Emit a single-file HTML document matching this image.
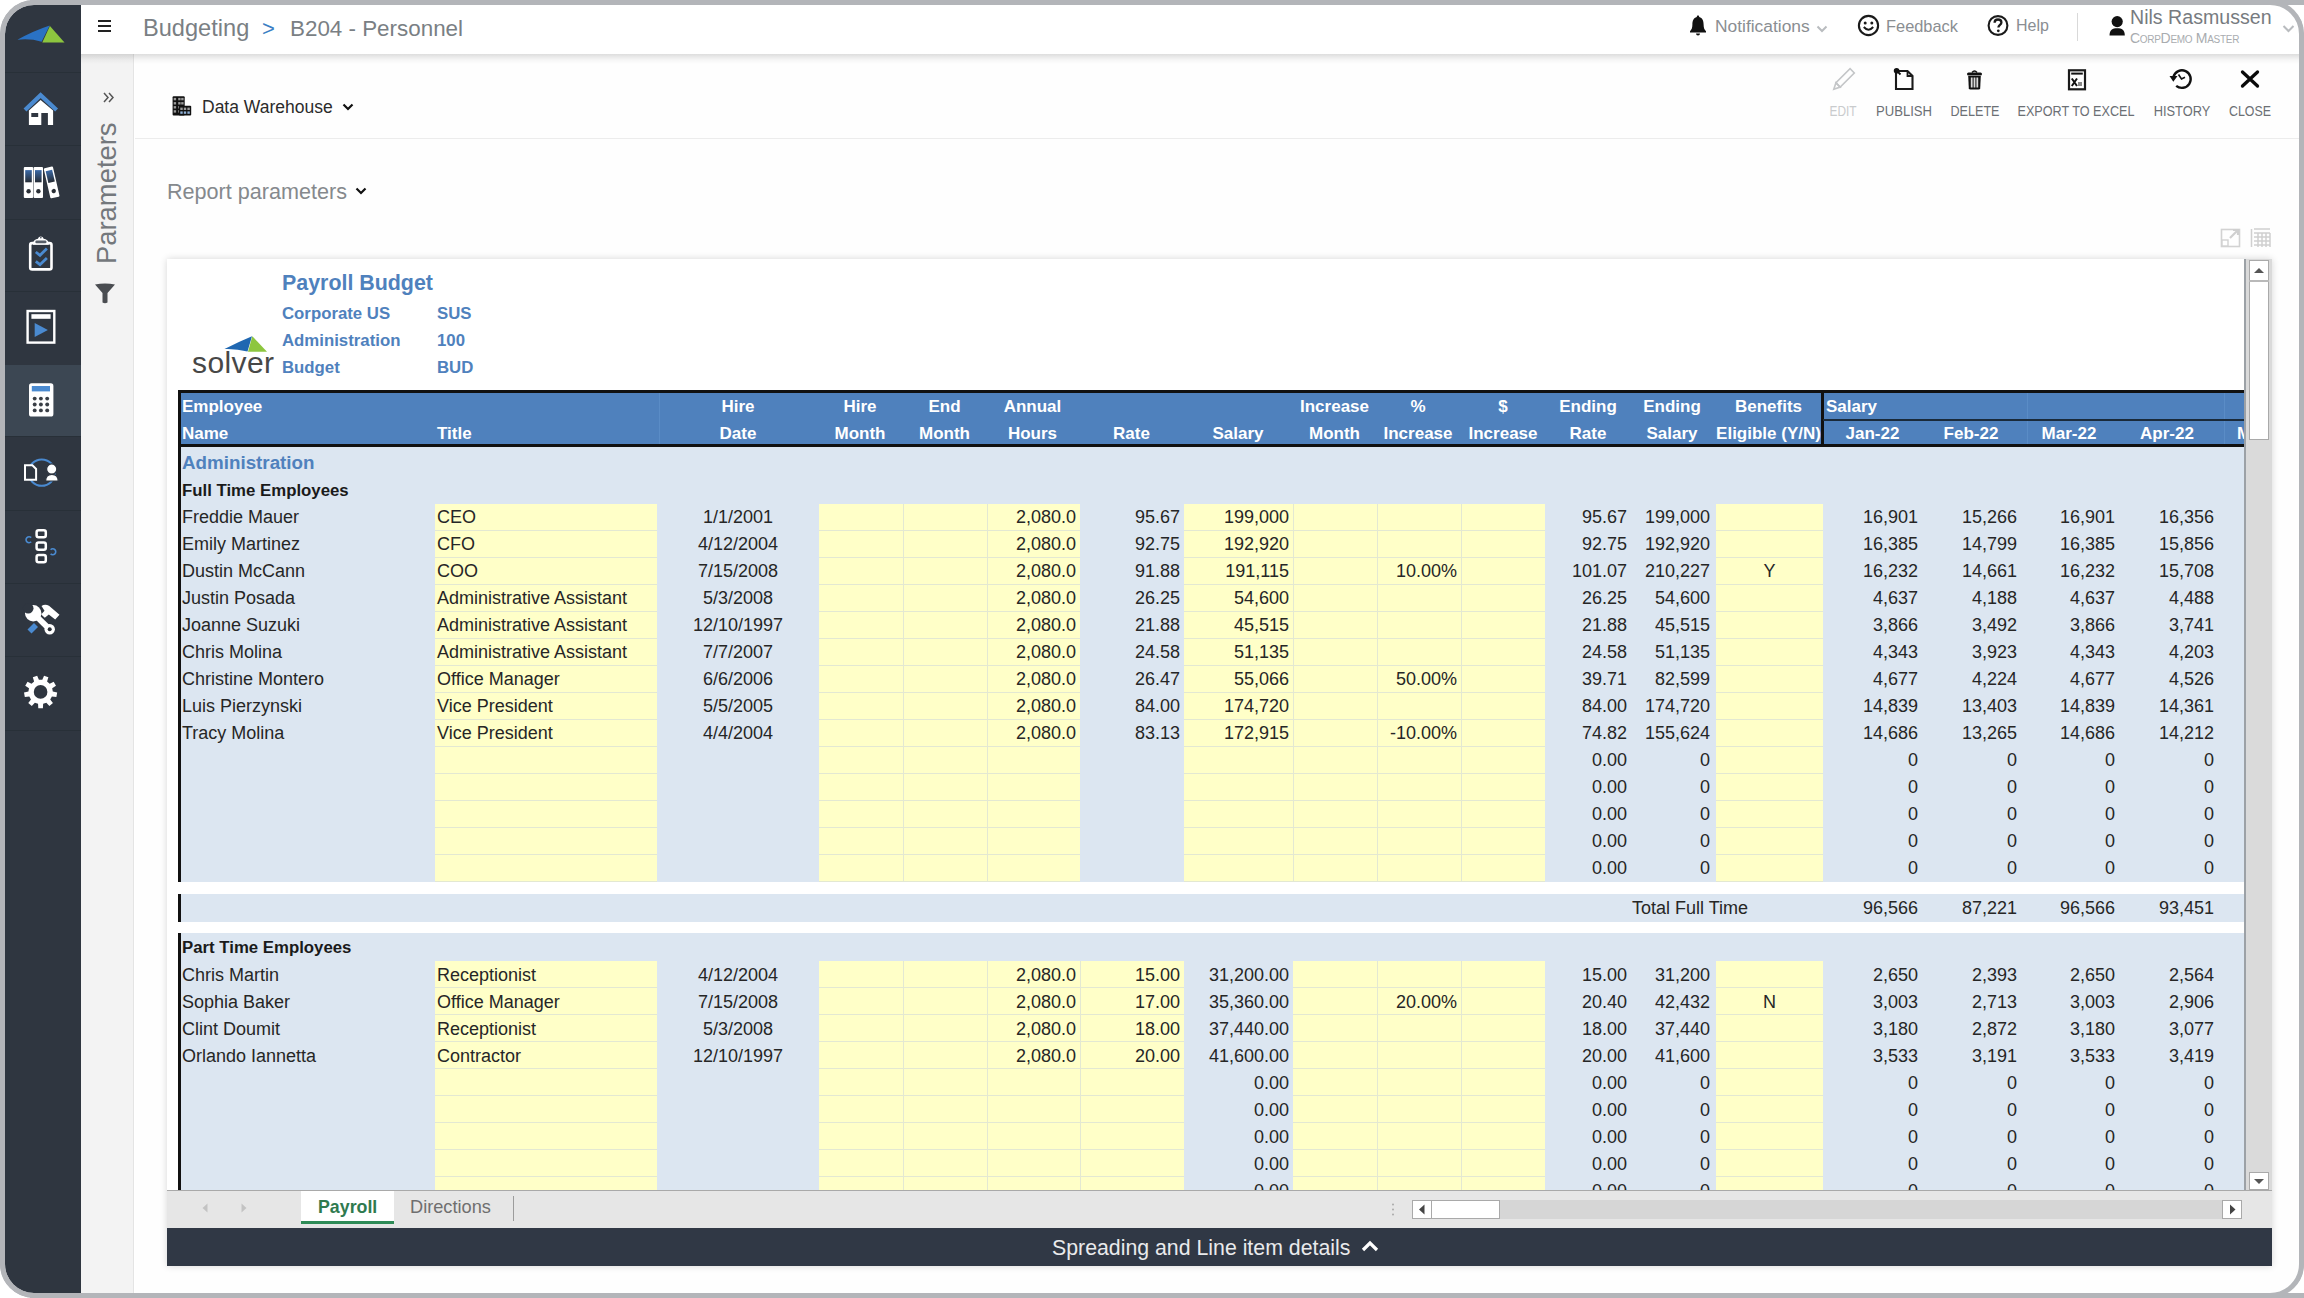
<!DOCTYPE html><html><head><meta charset="utf-8"><style>
*{margin:0;padding:0;box-sizing:border-box}
html,body{width:2304px;height:1298px;overflow:hidden;background:#fff;font-family:"Liberation Sans",sans-serif}
.a{position:absolute}
.t{position:absolute;white-space:nowrap}
.c{position:absolute;white-space:nowrap;font-size:18px;line-height:27px;color:#262626}
.r{text-align:right}
.m{text-align:center}
.hb{position:absolute;white-space:nowrap;font-size:17px;line-height:27px;color:#fff;font-weight:bold}
</style></head><body>
<div class="a" style="left:0;top:0;width:2304px;height:1298px;border:5px solid #b3b5b9;border-radius:34px;"></div>
<div class="a" style="left:30px;top:0;width:2274px;height:5px;background:#b3b5b9"></div>
<div class="a" style="left:30px;top:1293px;width:2274px;height:5px;background:#b3b5b9"></div>
<div class="a" style="left:5px;top:5px;width:76px;height:1288px;background:#2f3640;border-radius:29px 0 0 29px"></div>
<div class="a" style="left:5px;top:72px;width:76px;height:1px;background:#283038"></div>
<div class="a" style="left:5px;top:145px;width:76px;height:1px;background:#283038"></div>
<div class="a" style="left:5px;top:219px;width:76px;height:1px;background:#283038"></div>
<div class="a" style="left:5px;top:291px;width:76px;height:1px;background:#283038"></div>
<div class="a" style="left:5px;top:365px;width:76px;height:1px;background:#283038"></div>
<div class="a" style="left:5px;top:436px;width:76px;height:1px;background:#283038"></div>
<div class="a" style="left:5px;top:510px;width:76px;height:1px;background:#283038"></div>
<div class="a" style="left:5px;top:583px;width:76px;height:1px;background:#283038"></div>
<div class="a" style="left:5px;top:656px;width:76px;height:1px;background:#283038"></div>
<div class="a" style="left:5px;top:730px;width:76px;height:1px;background:#283038"></div>
<div class="a" style="left:5px;top:365px;width:76px;height:71px;background:#3c4753"></div>
<div class="a" style="left:81px;top:5px;width:2218px;height:49px;background:#fff"></div>
<div class="a" style="left:81px;top:54px;width:53px;height:1239px;background:#f3f3f3;border-right:1px solid #e4e4e4"></div>
<div class="a" style="left:135px;top:54px;width:2164px;height:1239px;background:#fefefe"></div>
<div class="a" style="left:135px;top:138px;width:2164px;height:1px;background:#ececec"></div>
<div class="a" style="left:81px;top:54px;width:2218px;height:10px;background:linear-gradient(to bottom,rgba(0,0,0,0.13),rgba(0,0,0,0.03) 60%,rgba(0,0,0,0))"></div>
<div class="t" style="left:143px;top:12.5px;font-size:23.6px;line-height:30px;color:#7a7f84;">Budgeting</div>
<div class="t" style="left:262px;top:13.5px;font-size:22px;line-height:30px;color:#3b7fc4;">&gt;</div>
<div class="t" style="left:290px;top:13.5px;font-size:22.4px;line-height:30px;color:#7a7f84;">B204 - Personnel</div>
<div class="t" style="left:1715px;top:13px;font-size:17.4px;line-height:26px;color:#8a8e92;">Notifications</div>
<div class="t" style="left:1886px;top:13px;font-size:16.4px;line-height:26px;color:#8a8e92;">Feedback</div>
<div class="t" style="left:2016px;top:13px;font-size:16px;line-height:26px;color:#8a8e92;">Help</div>
<div class="a" style="left:2077px;top:13px;width:1px;height:28px;background:#d9d9d9"></div>
<div class="t" style="left:2130px;top:4px;font-size:19.6px;line-height:26px;color:#777b80;">Nils Rasmussen</div>
<div class="t" style="left:2130px;top:30px;font-size:14px;line-height:16px;color:#a9acaf;font-variant:small-caps;letter-spacing:-0.3px">CorpDemo Master</div>
<div class="t" style="left:202px;top:95px;font-size:17.5px;line-height:24px;color:#2b2b2b;">Data Warehouse</div>
<div class="t" style="left:167px;top:178px;font-size:21.6px;line-height:28px;color:#85898d;">Report parameters</div>
<div class="t" style="left:92px;top:264px;font-size:27.4px;line-height:30px;color:#74787c;transform:rotate(-90deg);transform-origin:0 0;">Parameters</div>
<div class="t m" style="left:1742.5px;top:102px;width:200px;font-size:14.5px;line-height:18px;color:#c9cbcd;transform:scaleX(0.817);">EDIT</div>
<div class="t m" style="left:1804px;top:102px;width:200px;font-size:14.5px;line-height:18px;color:#6c7075;transform:scaleX(0.902);">PUBLISH</div>
<div class="t m" style="left:1875px;top:102px;width:200px;font-size:14.5px;line-height:18px;color:#6c7075;transform:scaleX(0.869);">DELETE</div>
<div class="t m" style="left:1976.3000000000002px;top:102px;width:200px;font-size:14.5px;line-height:18px;color:#6c7075;transform:scaleX(0.871);">EXPORT TO EXCEL</div>
<div class="t m" style="left:2082.3px;top:102px;width:200px;font-size:14.5px;line-height:18px;color:#6c7075;transform:scaleX(0.885);">HISTORY</div>
<div class="t m" style="left:2149.7px;top:102px;width:200px;font-size:14.5px;line-height:18px;color:#6c7075;transform:scaleX(0.854);">CLOSE</div>
<div class="a" style="left:167px;top:259px;width:2105px;height:1007px;background:#fff;box-shadow:0 0 7px rgba(0,0,0,0.16)"></div>
<div class="a" style="left:2244px;top:259px;width:28px;height:932px;background:#dadada;border-left:2px solid #9ca1a6"></div>
<div class="a" style="left:2249px;top:260px;width:20px;height:180px;background:#fff;border:1px solid #a9a9a9"></div>
<div class="a" style="left:2249px;top:280px;width:20px;height:2px;background:#b9b9b9"></div>
<div class="a" style="left:2249px;top:1172px;width:20px;height:18px;background:#fff;border:1px solid #a9a9a9"></div>
<div class="a" style="left:167px;top:1190px;width:2105px;height:38px;background:#e6e6e6;border-top:1px solid #a9a9a9"></div>
<div class="a" style="left:301px;top:1191px;width:93px;height:33px;background:#fff;border-bottom:3px solid #2e8b57"></div>
<div class="t" style="left:318px;top:1195px;font-size:17.8px;line-height:24px;color:#2f7a4f;font-weight:bold;">Payroll</div>
<div class="t" style="left:410px;top:1195px;font-size:18.2px;line-height:24px;color:#6f6f6f;">Directions</div>
<div class="a" style="left:513px;top:1196px;width:1px;height:25px;background:#9c9c9c"></div>
<div class="a" style="left:1412px;top:1200px;width:830px;height:19px;background:#d6d6d6"></div>
<div class="a" style="left:1412px;top:1200px;width:88px;height:19px;background:#fff;border:1px solid #a9a9a9"></div>
<div class="a" style="left:1431px;top:1200px;width:1px;height:19px;background:#a9a9a9"></div>
<div class="a" style="left:2222px;top:1200px;width:20px;height:19px;background:#fff;border:1px solid #a9a9a9"></div>
<div class="a" style="left:167px;top:1228px;width:2105px;height:38px;background:#303845"></div>
<div class="t" style="left:1052px;top:1234px;font-size:21.3px;line-height:28px;color:#e9eaec;">Spreading and Line item details</div>
<div class="a" style="left:0;top:0;width:2304px;height:1298px;clip-path:inset(259px 60px 108px 167px)">
<div class="t" style="left:282px;top:270px;font-size:21.4px;line-height:26px;color:#4f81bd;font-weight:bold;">Payroll Budget</div>
<div class="t" style="left:282px;top:301px;font-size:16.8px;line-height:26px;color:#4f81bd;font-weight:bold;">Corporate US</div>
<div class="t" style="left:437px;top:301px;font-size:16.8px;line-height:26px;color:#4f81bd;font-weight:bold;">SUS</div>
<div class="t" style="left:282px;top:328px;font-size:16.8px;line-height:26px;color:#4f81bd;font-weight:bold;">Administration</div>
<div class="t" style="left:437px;top:328px;font-size:16.8px;line-height:26px;color:#4f81bd;font-weight:bold;">100</div>
<div class="t" style="left:282px;top:355px;font-size:16.8px;line-height:26px;color:#4f81bd;font-weight:bold;">Budget</div>
<div class="t" style="left:437px;top:355px;font-size:16.8px;line-height:26px;color:#4f81bd;font-weight:bold;">BUD</div>
<div class="t" style="left:192px;top:347px;font-size:30px;line-height:32px;color:#474747;letter-spacing:0.4px">solver</div>
<div class="a" style="left:178px;top:390px;width:2066px;height:57px;background:#4f81bd;border-top:3px solid #111;border-bottom:3px solid #111;border-left:3px solid #111"></div>
<div class="a" style="left:659px;top:393px;width:1px;height:51px;background:#5a8cc6"></div>
<div class="a" style="left:2027px;top:393px;width:1px;height:51px;background:#5a8cc6"></div>
<div class="a" style="left:2224px;top:393px;width:1px;height:51px;background:#5a8cc6"></div>
<div class="a" style="left:1821px;top:390px;width:3px;height:57px;background:#111"></div>
<div class="a" style="left:1823px;top:419px;width:421px;height:2px;background:#1a2a3a"></div>
<div class="hb" style="left:182px;top:393px">Employee</div>
<div class="hb" style="left:182px;top:420px">Name</div>
<div class="hb" style="left:437px;top:420px">Title</div>
<div class="hb m" style="left:638px;top:393px;width:200px">Hire</div>
<div class="hb m" style="left:638px;top:420px;width:200px">Date</div>
<div class="hb m" style="left:760px;top:393px;width:200px">Hire</div>
<div class="hb m" style="left:760px;top:420px;width:200px">Month</div>
<div class="hb m" style="left:844.5px;top:393px;width:200px">End</div>
<div class="hb m" style="left:844.5px;top:420px;width:200px">Month</div>
<div class="hb m" style="left:932.5px;top:393px;width:200px">Annual</div>
<div class="hb m" style="left:932.5px;top:420px;width:200px">Hours</div>
<div class="hb m" style="left:1031.5px;top:420px;width:200px">Rate</div>
<div class="hb m" style="left:1138px;top:420px;width:200px">Salary</div>
<div class="hb m" style="left:1234.5px;top:393px;width:200px">Increase</div>
<div class="hb m" style="left:1234.5px;top:420px;width:200px">Month</div>
<div class="hb m" style="left:1318px;top:393px;width:200px">%</div>
<div class="hb m" style="left:1318px;top:420px;width:200px">Increase</div>
<div class="hb m" style="left:1403px;top:393px;width:200px">$</div>
<div class="hb m" style="left:1403px;top:420px;width:200px">Increase</div>
<div class="hb m" style="left:1488px;top:393px;width:200px">Ending</div>
<div class="hb m" style="left:1488px;top:420px;width:200px">Rate</div>
<div class="hb m" style="left:1572px;top:393px;width:200px">Ending</div>
<div class="hb m" style="left:1572px;top:420px;width:200px">Salary</div>
<div class="hb m" style="left:1668.5px;top:393px;width:200px">Benefits</div>
<div class="hb m" style="left:1668.5px;top:420px;width:200px">Eligible (Y/N)</div>
<div class="hb" style="left:1826px;top:393px">Salary</div>
<div class="hb m" style="left:1772.5px;top:420px;width:200px">Jan-22</div>
<div class="hb m" style="left:1871px;top:420px;width:200px">Feb-22</div>
<div class="hb m" style="left:1969px;top:420px;width:200px">Mar-22</div>
<div class="hb m" style="left:2067px;top:420px;width:200px">Apr-22</div>
<div class="hb" style="left:2237px;top:420px">May-22</div>
<div class="a" style="left:178px;top:447px;width:2066px;height:435px;background:#dce6f1;border-left:3px solid #111"></div>
<div class="a" style="left:178px;top:894px;width:2066px;height:28px;background:#dce6f1;border-left:3px solid #111"></div>
<div class="a" style="left:178px;top:933px;width:2066px;height:257px;background:#dce6f1;border-left:3px solid #111"></div>
<div class="t" style="left:182px;top:449px;font-size:18.8px;line-height:28px;color:#4f81bd;font-weight:bold;">Administration</div>
<div class="t" style="left:182px;top:477px;font-size:16.8px;line-height:27px;color:#1a1a1a;font-weight:bold;">Full Time Employees</div>
<div class="t" style="left:182px;top:934px;font-size:16.8px;line-height:27px;color:#1a1a1a;font-weight:bold;">Part Time Employees</div>
<div class="a" style="left:435px;top:504px;width:222px;height:378px;background:repeating-linear-gradient(to bottom,#ffffc8 0,#ffffc8 26px,#e3e8d2 26px,#e3e8d2 27px);"></div>
<div class="a" style="left:819px;top:504px;width:84px;height:378px;background:repeating-linear-gradient(to bottom,#ffffc8 0,#ffffc8 26px,#e3e8d2 26px,#e3e8d2 27px);"></div>
<div class="a" style="left:903px;top:504px;width:84px;height:378px;background:repeating-linear-gradient(to bottom,#ffffc8 0,#ffffc8 26px,#e3e8d2 26px,#e3e8d2 27px);border-left:1px solid #e3e8d2;"></div>
<div class="a" style="left:987px;top:504px;width:93px;height:378px;background:repeating-linear-gradient(to bottom,#ffffc8 0,#ffffc8 26px,#e3e8d2 26px,#e3e8d2 27px);border-left:1px solid #e3e8d2;"></div>
<div class="a" style="left:1184px;top:504px;width:109px;height:378px;background:repeating-linear-gradient(to bottom,#ffffc8 0,#ffffc8 26px,#e3e8d2 26px,#e3e8d2 27px);"></div>
<div class="a" style="left:1293px;top:504px;width:84px;height:378px;background:repeating-linear-gradient(to bottom,#ffffc8 0,#ffffc8 26px,#e3e8d2 26px,#e3e8d2 27px);border-left:1px solid #e3e8d2;"></div>
<div class="a" style="left:1377px;top:504px;width:84px;height:378px;background:repeating-linear-gradient(to bottom,#ffffc8 0,#ffffc8 26px,#e3e8d2 26px,#e3e8d2 27px);border-left:1px solid #e3e8d2;"></div>
<div class="a" style="left:1461px;top:504px;width:84px;height:378px;background:repeating-linear-gradient(to bottom,#ffffc8 0,#ffffc8 26px,#e3e8d2 26px,#e3e8d2 27px);border-left:1px solid #e3e8d2;"></div>
<div class="a" style="left:1716px;top:504px;width:107px;height:378px;background:repeating-linear-gradient(to bottom,#ffffc8 0,#ffffc8 26px,#e3e8d2 26px,#e3e8d2 27px);"></div>
<div class="a" style="left:435px;top:961px;width:222px;height:243px;background:repeating-linear-gradient(to bottom,#ffffc8 0,#ffffc8 26px,#e3e8d2 26px,#e3e8d2 27px);"></div>
<div class="a" style="left:819px;top:961px;width:84px;height:243px;background:repeating-linear-gradient(to bottom,#ffffc8 0,#ffffc8 26px,#e3e8d2 26px,#e3e8d2 27px);"></div>
<div class="a" style="left:903px;top:961px;width:84px;height:243px;background:repeating-linear-gradient(to bottom,#ffffc8 0,#ffffc8 26px,#e3e8d2 26px,#e3e8d2 27px);border-left:1px solid #e3e8d2;"></div>
<div class="a" style="left:987px;top:961px;width:93px;height:243px;background:repeating-linear-gradient(to bottom,#ffffc8 0,#ffffc8 26px,#e3e8d2 26px,#e3e8d2 27px);border-left:1px solid #e3e8d2;"></div>
<div class="a" style="left:1080px;top:961px;width:104px;height:243px;background:repeating-linear-gradient(to bottom,#ffffc8 0,#ffffc8 26px,#e3e8d2 26px,#e3e8d2 27px);border-left:1px solid #e3e8d2;"></div>
<div class="a" style="left:1293px;top:961px;width:84px;height:243px;background:repeating-linear-gradient(to bottom,#ffffc8 0,#ffffc8 26px,#e3e8d2 26px,#e3e8d2 27px);"></div>
<div class="a" style="left:1377px;top:961px;width:84px;height:243px;background:repeating-linear-gradient(to bottom,#ffffc8 0,#ffffc8 26px,#e3e8d2 26px,#e3e8d2 27px);border-left:1px solid #e3e8d2;"></div>
<div class="a" style="left:1461px;top:961px;width:84px;height:243px;background:repeating-linear-gradient(to bottom,#ffffc8 0,#ffffc8 26px,#e3e8d2 26px,#e3e8d2 27px);border-left:1px solid #e3e8d2;"></div>
<div class="a" style="left:1716px;top:961px;width:107px;height:243px;background:repeating-linear-gradient(to bottom,#ffffc8 0,#ffffc8 26px,#e3e8d2 26px,#e3e8d2 27px);"></div>
<div class="c" style="left:182px;top:504px">Freddie Mauer</div>
<div class="c" style="left:437px;top:504px">CEO</div>
<div class="c m" style="left:658px;top:504px;width:160px">1/1/2001</div>
<div class="c r" style="left:926px;top:504px;width:150px">2,080.0</div>
<div class="c r" style="left:1030px;top:504px;width:150px">95.67</div>
<div class="c r" style="left:1139px;top:504px;width:150px">199,000</div>
<div class="c r" style="left:1477px;top:504px;width:150px">95.67</div>
<div class="c r" style="left:1560px;top:504px;width:150px">199,000</div>
<div class="c r" style="left:1768px;top:504px;width:150px">16,901</div>
<div class="c r" style="left:1867px;top:504px;width:150px">15,266</div>
<div class="c r" style="left:1965px;top:504px;width:150px">16,901</div>
<div class="c r" style="left:2064px;top:504px;width:150px">16,356</div>
<div class="c" style="left:182px;top:531px">Emily Martinez</div>
<div class="c" style="left:437px;top:531px">CFO</div>
<div class="c m" style="left:658px;top:531px;width:160px">4/12/2004</div>
<div class="c r" style="left:926px;top:531px;width:150px">2,080.0</div>
<div class="c r" style="left:1030px;top:531px;width:150px">92.75</div>
<div class="c r" style="left:1139px;top:531px;width:150px">192,920</div>
<div class="c r" style="left:1477px;top:531px;width:150px">92.75</div>
<div class="c r" style="left:1560px;top:531px;width:150px">192,920</div>
<div class="c r" style="left:1768px;top:531px;width:150px">16,385</div>
<div class="c r" style="left:1867px;top:531px;width:150px">14,799</div>
<div class="c r" style="left:1965px;top:531px;width:150px">16,385</div>
<div class="c r" style="left:2064px;top:531px;width:150px">15,856</div>
<div class="c" style="left:182px;top:558px">Dustin McCann</div>
<div class="c" style="left:437px;top:558px">COO</div>
<div class="c m" style="left:658px;top:558px;width:160px">7/15/2008</div>
<div class="c r" style="left:926px;top:558px;width:150px">2,080.0</div>
<div class="c r" style="left:1030px;top:558px;width:150px">91.88</div>
<div class="c r" style="left:1139px;top:558px;width:150px">191,115</div>
<div class="c r" style="left:1307px;top:558px;width:150px">10.00%</div>
<div class="c r" style="left:1477px;top:558px;width:150px">101.07</div>
<div class="c r" style="left:1560px;top:558px;width:150px">210,227</div>
<div class="c m" style="left:1689.5px;top:558px;width:160px">Y</div>
<div class="c r" style="left:1768px;top:558px;width:150px">16,232</div>
<div class="c r" style="left:1867px;top:558px;width:150px">14,661</div>
<div class="c r" style="left:1965px;top:558px;width:150px">16,232</div>
<div class="c r" style="left:2064px;top:558px;width:150px">15,708</div>
<div class="c" style="left:182px;top:585px">Justin Posada</div>
<div class="c" style="left:437px;top:585px">Administrative Assistant</div>
<div class="c m" style="left:658px;top:585px;width:160px">5/3/2008</div>
<div class="c r" style="left:926px;top:585px;width:150px">2,080.0</div>
<div class="c r" style="left:1030px;top:585px;width:150px">26.25</div>
<div class="c r" style="left:1139px;top:585px;width:150px">54,600</div>
<div class="c r" style="left:1477px;top:585px;width:150px">26.25</div>
<div class="c r" style="left:1560px;top:585px;width:150px">54,600</div>
<div class="c r" style="left:1768px;top:585px;width:150px">4,637</div>
<div class="c r" style="left:1867px;top:585px;width:150px">4,188</div>
<div class="c r" style="left:1965px;top:585px;width:150px">4,637</div>
<div class="c r" style="left:2064px;top:585px;width:150px">4,488</div>
<div class="c" style="left:182px;top:612px">Joanne Suzuki</div>
<div class="c" style="left:437px;top:612px">Administrative Assistant</div>
<div class="c m" style="left:658px;top:612px;width:160px">12/10/1997</div>
<div class="c r" style="left:926px;top:612px;width:150px">2,080.0</div>
<div class="c r" style="left:1030px;top:612px;width:150px">21.88</div>
<div class="c r" style="left:1139px;top:612px;width:150px">45,515</div>
<div class="c r" style="left:1477px;top:612px;width:150px">21.88</div>
<div class="c r" style="left:1560px;top:612px;width:150px">45,515</div>
<div class="c r" style="left:1768px;top:612px;width:150px">3,866</div>
<div class="c r" style="left:1867px;top:612px;width:150px">3,492</div>
<div class="c r" style="left:1965px;top:612px;width:150px">3,866</div>
<div class="c r" style="left:2064px;top:612px;width:150px">3,741</div>
<div class="c" style="left:182px;top:639px">Chris Molina</div>
<div class="c" style="left:437px;top:639px">Administrative Assistant</div>
<div class="c m" style="left:658px;top:639px;width:160px">7/7/2007</div>
<div class="c r" style="left:926px;top:639px;width:150px">2,080.0</div>
<div class="c r" style="left:1030px;top:639px;width:150px">24.58</div>
<div class="c r" style="left:1139px;top:639px;width:150px">51,135</div>
<div class="c r" style="left:1477px;top:639px;width:150px">24.58</div>
<div class="c r" style="left:1560px;top:639px;width:150px">51,135</div>
<div class="c r" style="left:1768px;top:639px;width:150px">4,343</div>
<div class="c r" style="left:1867px;top:639px;width:150px">3,923</div>
<div class="c r" style="left:1965px;top:639px;width:150px">4,343</div>
<div class="c r" style="left:2064px;top:639px;width:150px">4,203</div>
<div class="c" style="left:182px;top:666px">Christine Montero</div>
<div class="c" style="left:437px;top:666px">Office Manager</div>
<div class="c m" style="left:658px;top:666px;width:160px">6/6/2006</div>
<div class="c r" style="left:926px;top:666px;width:150px">2,080.0</div>
<div class="c r" style="left:1030px;top:666px;width:150px">26.47</div>
<div class="c r" style="left:1139px;top:666px;width:150px">55,066</div>
<div class="c r" style="left:1307px;top:666px;width:150px">50.00%</div>
<div class="c r" style="left:1477px;top:666px;width:150px">39.71</div>
<div class="c r" style="left:1560px;top:666px;width:150px">82,599</div>
<div class="c r" style="left:1768px;top:666px;width:150px">4,677</div>
<div class="c r" style="left:1867px;top:666px;width:150px">4,224</div>
<div class="c r" style="left:1965px;top:666px;width:150px">4,677</div>
<div class="c r" style="left:2064px;top:666px;width:150px">4,526</div>
<div class="c" style="left:182px;top:693px">Luis Pierzynski</div>
<div class="c" style="left:437px;top:693px">Vice President</div>
<div class="c m" style="left:658px;top:693px;width:160px">5/5/2005</div>
<div class="c r" style="left:926px;top:693px;width:150px">2,080.0</div>
<div class="c r" style="left:1030px;top:693px;width:150px">84.00</div>
<div class="c r" style="left:1139px;top:693px;width:150px">174,720</div>
<div class="c r" style="left:1477px;top:693px;width:150px">84.00</div>
<div class="c r" style="left:1560px;top:693px;width:150px">174,720</div>
<div class="c r" style="left:1768px;top:693px;width:150px">14,839</div>
<div class="c r" style="left:1867px;top:693px;width:150px">13,403</div>
<div class="c r" style="left:1965px;top:693px;width:150px">14,839</div>
<div class="c r" style="left:2064px;top:693px;width:150px">14,361</div>
<div class="c" style="left:182px;top:720px">Tracy Molina</div>
<div class="c" style="left:437px;top:720px">Vice President</div>
<div class="c m" style="left:658px;top:720px;width:160px">4/4/2004</div>
<div class="c r" style="left:926px;top:720px;width:150px">2,080.0</div>
<div class="c r" style="left:1030px;top:720px;width:150px">83.13</div>
<div class="c r" style="left:1139px;top:720px;width:150px">172,915</div>
<div class="c r" style="left:1307px;top:720px;width:150px">-10.00%</div>
<div class="c r" style="left:1477px;top:720px;width:150px">74.82</div>
<div class="c r" style="left:1560px;top:720px;width:150px">155,624</div>
<div class="c r" style="left:1768px;top:720px;width:150px">14,686</div>
<div class="c r" style="left:1867px;top:720px;width:150px">13,265</div>
<div class="c r" style="left:1965px;top:720px;width:150px">14,686</div>
<div class="c r" style="left:2064px;top:720px;width:150px">14,212</div>
<div class="c r" style="left:1477px;top:747px;width:150px">0.00</div>
<div class="c r" style="left:1560px;top:747px;width:150px">0</div>
<div class="c r" style="left:1768px;top:747px;width:150px">0</div>
<div class="c r" style="left:1867px;top:747px;width:150px">0</div>
<div class="c r" style="left:1965px;top:747px;width:150px">0</div>
<div class="c r" style="left:2064px;top:747px;width:150px">0</div>
<div class="c r" style="left:1477px;top:774px;width:150px">0.00</div>
<div class="c r" style="left:1560px;top:774px;width:150px">0</div>
<div class="c r" style="left:1768px;top:774px;width:150px">0</div>
<div class="c r" style="left:1867px;top:774px;width:150px">0</div>
<div class="c r" style="left:1965px;top:774px;width:150px">0</div>
<div class="c r" style="left:2064px;top:774px;width:150px">0</div>
<div class="c r" style="left:1477px;top:801px;width:150px">0.00</div>
<div class="c r" style="left:1560px;top:801px;width:150px">0</div>
<div class="c r" style="left:1768px;top:801px;width:150px">0</div>
<div class="c r" style="left:1867px;top:801px;width:150px">0</div>
<div class="c r" style="left:1965px;top:801px;width:150px">0</div>
<div class="c r" style="left:2064px;top:801px;width:150px">0</div>
<div class="c r" style="left:1477px;top:828px;width:150px">0.00</div>
<div class="c r" style="left:1560px;top:828px;width:150px">0</div>
<div class="c r" style="left:1768px;top:828px;width:150px">0</div>
<div class="c r" style="left:1867px;top:828px;width:150px">0</div>
<div class="c r" style="left:1965px;top:828px;width:150px">0</div>
<div class="c r" style="left:2064px;top:828px;width:150px">0</div>
<div class="c r" style="left:1477px;top:855px;width:150px">0.00</div>
<div class="c r" style="left:1560px;top:855px;width:150px">0</div>
<div class="c r" style="left:1768px;top:855px;width:150px">0</div>
<div class="c r" style="left:1867px;top:855px;width:150px">0</div>
<div class="c r" style="left:1965px;top:855px;width:150px">0</div>
<div class="c r" style="left:2064px;top:855px;width:150px">0</div>
<div class="c" style="left:182px;top:962px">Chris Martin</div>
<div class="c" style="left:437px;top:962px">Receptionist</div>
<div class="c m" style="left:658px;top:962px;width:160px">4/12/2004</div>
<div class="c r" style="left:926px;top:962px;width:150px">2,080.0</div>
<div class="c r" style="left:1030px;top:962px;width:150px">15.00</div>
<div class="c r" style="left:1139px;top:962px;width:150px">31,200.00</div>
<div class="c r" style="left:1477px;top:962px;width:150px">15.00</div>
<div class="c r" style="left:1560px;top:962px;width:150px">31,200</div>
<div class="c r" style="left:1768px;top:962px;width:150px">2,650</div>
<div class="c r" style="left:1867px;top:962px;width:150px">2,393</div>
<div class="c r" style="left:1965px;top:962px;width:150px">2,650</div>
<div class="c r" style="left:2064px;top:962px;width:150px">2,564</div>
<div class="c" style="left:182px;top:989px">Sophia Baker</div>
<div class="c" style="left:437px;top:989px">Office Manager</div>
<div class="c m" style="left:658px;top:989px;width:160px">7/15/2008</div>
<div class="c r" style="left:926px;top:989px;width:150px">2,080.0</div>
<div class="c r" style="left:1030px;top:989px;width:150px">17.00</div>
<div class="c r" style="left:1139px;top:989px;width:150px">35,360.00</div>
<div class="c r" style="left:1307px;top:989px;width:150px">20.00%</div>
<div class="c r" style="left:1477px;top:989px;width:150px">20.40</div>
<div class="c r" style="left:1560px;top:989px;width:150px">42,432</div>
<div class="c m" style="left:1689.5px;top:989px;width:160px">N</div>
<div class="c r" style="left:1768px;top:989px;width:150px">3,003</div>
<div class="c r" style="left:1867px;top:989px;width:150px">2,713</div>
<div class="c r" style="left:1965px;top:989px;width:150px">3,003</div>
<div class="c r" style="left:2064px;top:989px;width:150px">2,906</div>
<div class="c" style="left:182px;top:1016px">Clint Doumit</div>
<div class="c" style="left:437px;top:1016px">Receptionist</div>
<div class="c m" style="left:658px;top:1016px;width:160px">5/3/2008</div>
<div class="c r" style="left:926px;top:1016px;width:150px">2,080.0</div>
<div class="c r" style="left:1030px;top:1016px;width:150px">18.00</div>
<div class="c r" style="left:1139px;top:1016px;width:150px">37,440.00</div>
<div class="c r" style="left:1477px;top:1016px;width:150px">18.00</div>
<div class="c r" style="left:1560px;top:1016px;width:150px">37,440</div>
<div class="c r" style="left:1768px;top:1016px;width:150px">3,180</div>
<div class="c r" style="left:1867px;top:1016px;width:150px">2,872</div>
<div class="c r" style="left:1965px;top:1016px;width:150px">3,180</div>
<div class="c r" style="left:2064px;top:1016px;width:150px">3,077</div>
<div class="c" style="left:182px;top:1043px">Orlando Iannetta</div>
<div class="c" style="left:437px;top:1043px">Contractor</div>
<div class="c m" style="left:658px;top:1043px;width:160px">12/10/1997</div>
<div class="c r" style="left:926px;top:1043px;width:150px">2,080.0</div>
<div class="c r" style="left:1030px;top:1043px;width:150px">20.00</div>
<div class="c r" style="left:1139px;top:1043px;width:150px">41,600.00</div>
<div class="c r" style="left:1477px;top:1043px;width:150px">20.00</div>
<div class="c r" style="left:1560px;top:1043px;width:150px">41,600</div>
<div class="c r" style="left:1768px;top:1043px;width:150px">3,533</div>
<div class="c r" style="left:1867px;top:1043px;width:150px">3,191</div>
<div class="c r" style="left:1965px;top:1043px;width:150px">3,533</div>
<div class="c r" style="left:2064px;top:1043px;width:150px">3,419</div>
<div class="c r" style="left:1139px;top:1070px;width:150px">0.00</div>
<div class="c r" style="left:1477px;top:1070px;width:150px">0.00</div>
<div class="c r" style="left:1560px;top:1070px;width:150px">0</div>
<div class="c r" style="left:1768px;top:1070px;width:150px">0</div>
<div class="c r" style="left:1867px;top:1070px;width:150px">0</div>
<div class="c r" style="left:1965px;top:1070px;width:150px">0</div>
<div class="c r" style="left:2064px;top:1070px;width:150px">0</div>
<div class="c r" style="left:1139px;top:1097px;width:150px">0.00</div>
<div class="c r" style="left:1477px;top:1097px;width:150px">0.00</div>
<div class="c r" style="left:1560px;top:1097px;width:150px">0</div>
<div class="c r" style="left:1768px;top:1097px;width:150px">0</div>
<div class="c r" style="left:1867px;top:1097px;width:150px">0</div>
<div class="c r" style="left:1965px;top:1097px;width:150px">0</div>
<div class="c r" style="left:2064px;top:1097px;width:150px">0</div>
<div class="c r" style="left:1139px;top:1124px;width:150px">0.00</div>
<div class="c r" style="left:1477px;top:1124px;width:150px">0.00</div>
<div class="c r" style="left:1560px;top:1124px;width:150px">0</div>
<div class="c r" style="left:1768px;top:1124px;width:150px">0</div>
<div class="c r" style="left:1867px;top:1124px;width:150px">0</div>
<div class="c r" style="left:1965px;top:1124px;width:150px">0</div>
<div class="c r" style="left:2064px;top:1124px;width:150px">0</div>
<div class="c r" style="left:1139px;top:1151px;width:150px">0.00</div>
<div class="c r" style="left:1477px;top:1151px;width:150px">0.00</div>
<div class="c r" style="left:1560px;top:1151px;width:150px">0</div>
<div class="c r" style="left:1768px;top:1151px;width:150px">0</div>
<div class="c r" style="left:1867px;top:1151px;width:150px">0</div>
<div class="c r" style="left:1965px;top:1151px;width:150px">0</div>
<div class="c r" style="left:2064px;top:1151px;width:150px">0</div>
<div class="c r" style="left:1139px;top:1178px;width:150px">0.00</div>
<div class="c r" style="left:1477px;top:1178px;width:150px">0.00</div>
<div class="c r" style="left:1560px;top:1178px;width:150px">0</div>
<div class="c r" style="left:1768px;top:1178px;width:150px">0</div>
<div class="c r" style="left:1867px;top:1178px;width:150px">0</div>
<div class="c r" style="left:1965px;top:1178px;width:150px">0</div>
<div class="c r" style="left:2064px;top:1178px;width:150px">0</div>
<div class="c m" style="left:1610px;top:895px;width:160px">Total Full Time</div>
<div class="c r" style="left:1768px;top:895px;width:150px">96,566</div>
<div class="c r" style="left:1867px;top:895px;width:150px">87,221</div>
<div class="c r" style="left:1965px;top:895px;width:150px">96,566</div>
<div class="c r" style="left:2064px;top:895px;width:150px">93,451</div>
</div>
<svg class="a" style="left:0px;top:0px;overflow:visible" width="90" height="60" viewBox="0 0 90 60"><path d="M17.4,39.8 Q33,31 49.7,25.5 L41.6,41.8 Q30,38.2 17.4,39.8Z" fill="#2a72c4"/><path d="M49.9,26 L42.3,42.5 L64.5,42.5Z" fill="#8dc63f"/></svg>
<svg class="a" style="left:15px;top:85px;overflow:visible" width="52" height="45" viewBox="0 0 52 45"><polyline points="10,25 25.6,10.2 41.6,25" fill="none" stroke="#4a8ad0" stroke-width="4.2"/><path fill-rule="evenodd" fill="#fff" d="M13.9,40 V25.6 L25.6,14.9 L38.1,25.6 V40 H32.9 V28 H26.3 V40 Z M16.3,28 h6.9 v3.9 h-6.9 Z"/></svg>
<svg class="a" style="left:15px;top:158px;overflow:visible" width="52" height="45" viewBox="0 0 52 45"><defs><linearGradient id="bg1" x1="0" y1="0" x2="0" y2="1"><stop offset="0" stop-color="#3b6aa8"/><stop offset="1" stop-color="#262c34"/></linearGradient></defs><rect x="8.8" y="9" width="9.4" height="30.9" rx="1" fill="#fff"/><rect x="10.200000000000001" y="12.1" width="6.6" height="12.2" fill="url(#bg1)"/><circle cx="13.600000000000001" cy="33.3" r="2.2" fill="#2a2f36"/><rect x="18.6" y="9" width="9.4" height="30.9" rx="1" fill="#fff"/><rect x="20.0" y="12.1" width="6.6" height="12.2" fill="url(#bg1)"/><circle cx="23.400000000000002" cy="33.3" r="2.2" fill="#2a2f36"/><g transform="rotate(-12.9 36.5 23.8)"><rect x="31.8" y="9" width="9.4" height="30.9" rx="1" fill="#fff"/><rect x="33.2" y="12.1" width="6.6" height="12.2" fill="url(#bg1)"/><circle cx="36.6" cy="33.3" r="2.2" fill="#2a2f36"/></g></svg>
<svg class="a" style="left:15px;top:230px;overflow:visible" width="52" height="45" viewBox="0 0 52 45"><rect x="15.2" y="13.1" width="21.3" height="26.3" rx="2" fill="none" stroke="#fff" stroke-width="2.6"/><path d="M18,14.8 C18,10.5 20.5,9.2 23,8.8 C23.8,5.6 27.8,5.6 28.6,8.8 C31.2,9.2 33.8,10.5 33.8,14.8Z" fill="#fff"/><rect x="20.3" y="10.6" width="11.2" height="2.6" rx="1.3" fill="#59606a"/><circle cx="25.8" cy="7.6" r="0.9" fill="#59606a"/><polyline points="20.8,22 25,25.3 31.9,18.5" fill="none" stroke="#4a8ad0" stroke-width="2.8"/><polyline points="20.8,31.4 25,34.7 31.9,27.9" fill="none" stroke="#4a8ad0" stroke-width="2.8"/></svg>
<svg class="a" style="left:15px;top:300px;overflow:visible" width="52" height="45" viewBox="0 0 52 45"><rect x="12.6" y="11" width="26.7" height="31.6" fill="none" stroke="#fff" stroke-width="2.4"/><rect x="16.4" y="14.2" width="19.2" height="4.6" fill="#fff"/><path d="M19.7,23 V36.9 L32.9,30Z" fill="#4a8ad0"/></svg>
<svg class="a" style="left:15px;top:373px;overflow:visible" width="52" height="45" viewBox="0 0 52 45"><rect x="14" y="10.3" width="24.4" height="33.3" rx="2.6" fill="#fff"/><rect x="16.8" y="13" width="18.2" height="5.4" fill="#4a8ad0"/><circle cx="19.7" cy="25.6" r="1.95" fill="#3a3f46"/><circle cx="19.7" cy="31.5" r="1.95" fill="#3a3f46"/><circle cx="19.7" cy="37.4" r="1.95" fill="#3a3f46"/><circle cx="25.9" cy="25.6" r="1.95" fill="#3a3f46"/><circle cx="25.9" cy="31.5" r="1.95" fill="#3a3f46"/><circle cx="25.9" cy="37.4" r="1.95" fill="#3a3f46"/><circle cx="32.2" cy="25.6" r="1.95" fill="#3a3f46"/><circle cx="32.2" cy="31.5" r="1.95" fill="#3a3f46"/><circle cx="32.2" cy="37.4" r="1.95" fill="#3a3f46"/></svg>
<svg class="a" style="left:15px;top:450px;overflow:visible" width="52" height="45" viewBox="0 0 52 45"><circle cx="26.7" cy="22.6" r="13.2" fill="none" stroke="#4a8ad0" stroke-width="2"/><path d="M10,15.3 H17.4 L21.1,19 V29.8 H10Z" fill="#2f3640" stroke="#fff" stroke-width="2"/><circle cx="36.7" cy="19.1" r="5.2" fill="#fff" stroke="#2f3640" stroke-width="1.4"/><path d="M30.6,31 C30.6,26.2 33,24.4 36.9,24.4 C40.8,24.4 43.2,26.2 43.2,31Z" fill="#fff" stroke="#2f3640" stroke-width="1.2"/></svg>
<svg class="a" style="left:15px;top:522px;overflow:visible" width="52" height="45" viewBox="0 0 52 45"><rect x="21.6" y="8.2" width="9.2" height="7.1" rx="2" fill="none" stroke="#fff" stroke-width="2.5"/><rect x="21.6" y="20.6" width="9.2" height="7.1" rx="2" fill="none" stroke="#fff" stroke-width="2.5"/><rect x="21.6" y="33.1" width="9.2" height="7.1" rx="2" fill="none" stroke="#fff" stroke-width="2.5"/><path d="M16.2,15.6 A3,3 0 1 0 16.2,19.8" fill="none" stroke="#4a8ad0" stroke-width="1.6"/><path d="M35.6,27.7 A3,3 0 1 1 35.6,31.9" fill="none" stroke="#4a8ad0" stroke-width="1.6"/></svg>
<svg class="a" style="left:15px;top:595px;overflow:visible" width="52" height="45" viewBox="0 0 52 45"><line x1="14.5" y1="36.5" x2="21" y2="30" stroke="#4a8ad0" stroke-width="5.6"/><path d="M26.5,11 Q30,8.8 34,10.8 L44.5,19.8 L40.2,24.6 L33.8,19.4 L29.8,22.8 L26.2,19.5 L29.5,15.8 Q27.8,13 26.5,11Z" fill="#fff"/><line x1="18" y1="18" x2="34.7" y2="34.3" stroke="#fff" stroke-width="5.8"/><circle cx="34.7" cy="34.3" r="5.2" fill="#fff"/><circle cx="34.7" cy="34.3" r="2" fill="#2a2f36"/><circle cx="18.2" cy="18.2" r="8.2" fill="#fff"/><circle cx="13.2" cy="13.2" r="5.3" fill="#2f3640"/></svg>
<svg class="a" style="left:15px;top:668px;overflow:visible" width="52" height="45" viewBox="0 0 52 45"><path fill="#fff" fill-rule="evenodd" d="M28.14,35.83 L27.91,40.34 L23.29,40.34 L23.06,35.83 L19.87,34.67 L16.80,37.98 L13.26,35.01 L15.99,31.41 L14.29,28.47 L9.81,29.03 L9.01,24.48 L13.41,23.47 L14.00,20.13 L10.21,17.68 L12.52,13.68 L16.53,15.74 L19.13,13.55 L17.81,9.24 L22.15,7.66 L23.90,11.82 L27.30,11.82 L29.05,7.66 L33.39,9.24 L32.07,13.55 L34.67,15.74 L38.68,13.68 L40.99,17.68 L37.20,20.13 L37.79,23.47 L42.19,24.48 L41.39,29.03 L36.91,28.47 L35.21,31.41 L37.94,35.01 L34.40,37.98 L31.33,34.67Z M32.4,23.9 A6.8,6.8 0 1 0 18.8,23.9 A6.8,6.8 0 1 0 32.4,23.9Z"/></svg>
<svg class="a" style="left:98px;top:19px;overflow:visible" width="14" height="14" viewBox="0 0 14 14"><rect x="0" y="1" width="13" height="2" fill="#222"/><rect x="0" y="6" width="13" height="2" fill="#222"/><rect x="0" y="11" width="13" height="2" fill="#222"/></svg>
<svg class="a" style="left:1688px;top:14px;overflow:visible" width="20" height="22" viewBox="0 0 20 22"><path d="M10,1.5 C11,1.5 11.2,2.2 11.2,3 C14.5,3.8 15.6,6.8 15.6,10.5 C15.6,14 16.5,15.8 18,17.2 V18.5 H2 V17.2 C3.5,15.8 4.4,14 4.4,10.5 C4.4,6.8 5.5,3.8 8.8,3 C8.8,2.2 9,1.5 10,1.5Z" fill="#111"/><path d="M8,19.5 A2,2 0 0 0 12,19.5Z" fill="#111"/></svg>
<svg class="a" style="left:1816px;top:24px;overflow:visible" width="12" height="10" viewBox="0 0 12 10"><polyline points="1.5,2.5 6,7 10.5,2.5" fill="none" stroke="#b9bcbf" stroke-width="2"/></svg>
<svg class="a" style="left:1857px;top:14px;overflow:visible" width="23" height="23" viewBox="0 0 23 23"><circle cx="11.5" cy="11.5" r="9.6" fill="none" stroke="#1a1a1a" stroke-width="2.1"/><circle cx="8.2" cy="9" r="1.5" fill="#1a1a1a"/><circle cx="14.8" cy="9" r="1.5" fill="#1a1a1a"/><path d="M6.8,13 Q11.5,18.3 16.2,13" fill="none" stroke="#1a1a1a" stroke-width="2"/></svg>
<svg class="a" style="left:1987px;top:14px;overflow:visible" width="23" height="23" viewBox="0 0 23 23"><circle cx="11" cy="11.5" r="9.4" fill="none" stroke="#1a1a1a" stroke-width="2.1"/><path d="M7.6,8.8 C7.6,6.5 9.2,5.5 11,5.5 C13,5.5 14.4,6.8 14.4,8.5 C14.4,10.8 11.4,11 11.4,13.5" fill="none" stroke="#1a1a1a" stroke-width="2.3"/><circle cx="11.3" cy="16.8" r="1.4" fill="#1a1a1a"/></svg>
<svg class="a" style="left:2108px;top:15px;overflow:visible" width="18" height="22" viewBox="0 0 18 22"><circle cx="9.2" cy="6.6" r="5.6" fill="#111"/><path d="M1.5,20.5 C1.5,15 4.5,13.2 9.2,13.2 C13.9,13.2 16.8,15 16.8,20.5Z" fill="#111"/></svg>
<svg class="a" style="left:2282px;top:24px;overflow:visible" width="13" height="10" viewBox="0 0 13 10"><polyline points="1.5,2 6.5,7 11.5,2" fill="none" stroke="#b9bcbf" stroke-width="2"/></svg>
<svg class="a" style="left:171px;top:95px;overflow:visible" width="22" height="23" viewBox="0 0 22 23"><rect x="1.6" y="1.2" width="12.1" height="19.4" rx="1" fill="#111"/><rect x="2.7" y="2.8999999999999995" width="2.4" height="2.4" fill="#9a9a9a"/><rect x="2.7" y="7.1000000000000005" width="2.4" height="2.4" fill="#9a9a9a"/><rect x="2.7" y="11.100000000000001" width="2.4" height="2.4" fill="#9a9a9a"/><rect x="2.7" y="15.2" width="2.4" height="2.4" fill="#9a9a9a"/><rect x="7.2" y="2.8999999999999995" width="2.4" height="2.4" fill="#9a9a9a"/><rect x="7.2" y="7.1000000000000005" width="2.4" height="2.4" fill="#9a9a9a"/><rect x="7.2" y="11.100000000000001" width="2.4" height="2.4" fill="#9a9a9a"/><rect x="7.2" y="15.2" width="2.4" height="2.4" fill="#9a9a9a"/><rect x="10.200000000000001" y="2.8999999999999995" width="2.4" height="2.4" fill="#9a9a9a"/><rect x="10.200000000000001" y="7.1000000000000005" width="2.4" height="2.4" fill="#9a9a9a"/><rect x="10.200000000000001" y="11.100000000000001" width="2.4" height="2.4" fill="#9a9a9a"/><rect x="10.200000000000001" y="15.2" width="2.4" height="2.4" fill="#9a9a9a"/><rect x="7.9" y="10.8" width="12.3" height="9.8" rx="1" fill="#111"/><rect x="9.3" y="12.600000000000001" width="2.4" height="2.4" fill="#9a9a9a"/><rect x="9.3" y="16.400000000000002" width="2.4" height="2.4" fill="#8fb0d6"/><rect x="12.8" y="12.600000000000001" width="2.4" height="2.4" fill="#9a9a9a"/><rect x="12.8" y="16.400000000000002" width="2.4" height="2.4" fill="#8fb0d6"/><rect x="16.400000000000002" y="12.600000000000001" width="2.4" height="2.4" fill="#9a9a9a"/><rect x="16.400000000000002" y="16.400000000000002" width="2.4" height="2.4" fill="#8fb0d6"/></svg>
<svg class="a" style="left:342px;top:102px;overflow:visible" width="12" height="10" viewBox="0 0 12 10"><polyline points="1.5,2.5 6,7 10.5,2.5" fill="none" stroke="#111" stroke-width="2.2"/></svg>
<svg class="a" style="left:355px;top:186px;overflow:visible" width="12" height="10" viewBox="0 0 12 10"><polyline points="1.5,2.5 6,7 10.5,2.5" fill="none" stroke="#111" stroke-width="2.2"/></svg>
<svg class="a" style="left:102px;top:91px;overflow:visible" width="13" height="14" viewBox="0 0 13 14"><polyline points="2,2 6,6.5 2,11" fill="none" stroke="#555" stroke-width="1.5"/><polyline points="7,2 11,6.5 7,11" fill="none" stroke="#555" stroke-width="1.5"/></svg>
<svg class="a" style="left:94px;top:283px;overflow:visible" width="22" height="22" viewBox="0 0 22 22"><path d="M1,1.5 Q11,-0.5 21,1.5 L13.5,10 V19.5 Q11,21 8.5,19.5 V10Z" fill="#4a4d51"/></svg>
<svg class="a" style="left:1830px;top:68px;overflow:visible" width="26" height="24" viewBox="0 0 26 24"><g transform="rotate(45 13 12)"><rect x="10" y="-1" width="6" height="20" fill="none" stroke="#c4c6c8" stroke-width="1.6"/><path d="M10,19 L13,25 L16,19Z" fill="none" stroke="#c4c6c8" stroke-width="1.6"/></g></svg>
<svg class="a" style="left:1893px;top:67px;overflow:visible" width="24" height="25" viewBox="0 0 24 25"><path d="M3,4 H14.5 L19.5,9 V22 H3Z" fill="none" stroke="#1a1a1a" stroke-width="2.1"/><path d="M14.5,4 V9 H19.5" fill="none" stroke="#1a1a1a" stroke-width="1.8"/><circle cx="3.6" cy="3.8" r="2.8" fill="#111"/><line x1="4" y1="4" x2="7.5" y2="7.5" stroke="#111" stroke-width="1.8"/></svg>
<svg class="a" style="left:1966px;top:69px;overflow:visible" width="18" height="22" viewBox="0 0 18 22"><rect x="1" y="3.5" width="15" height="3" rx="1.5" fill="#111"/><path d="M6,3.5 Q8.5,0.5 11,3.5" fill="none" stroke="#111" stroke-width="1.4"/><path d="M2.2,7 H14.8 L14.2,19.2 Q14,20.5 12.5,20.5 H4.5 Q3,20.5 2.8,19.2Z" fill="#111"/><rect x="4.8" y="8.5" width="1.8" height="10" fill="#fff" opacity="0.85"/><rect x="7.6" y="8.5" width="1.8" height="10" fill="#fff" opacity="0.85"/><rect x="10.4" y="8.5" width="1.8" height="10" fill="#fff" opacity="0.85"/></svg>
<svg class="a" style="left:2066px;top:67px;overflow:visible" width="22" height="25" viewBox="0 0 22 25"><rect x="3" y="3.3" width="16" height="19" fill="none" stroke="#1a1a1a" stroke-width="2.2"/><rect x="5.2" y="5.6" width="11.6" height="2" fill="#111"/><path d="M5.8,11.5 L11,19 M11,11.5 L5.8,19" stroke="#111" stroke-width="2"/><rect x="12" y="15" width="4" height="4" fill="#888"/></svg>
<svg class="a" style="left:2168px;top:66px;overflow:visible" width="26" height="26" viewBox="0 0 26 26"><path d="M8.2,19.8 A8.8,8.8 0 1 0 5.5,10.5" fill="none" stroke="#111" stroke-width="2.4"/><path d="M1.5,10 L9.5,10 L5.3,15.8Z" fill="#111"/><polyline points="10.5,8.5 13.5,13 17,11.2" fill="none" stroke="#111" stroke-width="1.6"/></svg>
<svg class="a" style="left:2240px;top:70px;overflow:visible" width="20" height="18" viewBox="0 0 20 18"><path d="M2.5,2 L17.5,16 M17.5,2 L2.5,16" stroke="#0a0a0a" stroke-width="3.3" stroke-linecap="round"/></svg>
<svg class="a" style="left:2220px;top:228px;overflow:visible" width="22" height="20" viewBox="0 0 22 20"><rect x="1.5" y="1.5" width="18" height="17" fill="none" stroke="#d2d2d2" stroke-width="1.6"/><path d="M10,10 L18,2 M13,2 H18 V7" fill="none" stroke="#cfcfcf" stroke-width="2.2"/><rect x="2" y="12" width="6" height="6" fill="#fff" stroke="#d2d2d2" stroke-width="1.4"/></svg>
<svg class="a" style="left:2250px;top:227px;overflow:visible" width="22" height="21" viewBox="0 0 22 21"><path d="M1.5,2 V20 M4,2 H20 M4,6 H20 M4,10 H20 M4,14 H20 M4,18 H20 M8,6 V20 M12,6 V20 M16,6 V20 M20,6 V20" fill="none" stroke="#d0d0d0" stroke-width="1.5"/></svg>
<svg class="a" style="left:2249px;top:262px;overflow:visible" width="20" height="18" viewBox="0 0 20 18"><path d="M5,11 L10,6 L15,11Z" fill="#555"/></svg>
<svg class="a" style="left:2249px;top:1173px;overflow:visible" width="20" height="17" viewBox="0 0 20 17"><path d="M5,6 L10,11 L15,6Z" fill="#555"/></svg>
<svg class="a" style="left:1412px;top:1200px;overflow:visible" width="20" height="19" viewBox="0 0 20 19"><path d="M12.5,4.5 L7,9.5 L12.5,14.5Z" fill="#444"/></svg>
<svg class="a" style="left:2222px;top:1200px;overflow:visible" width="20" height="19" viewBox="0 0 20 19"><path d="M8,4.5 L13.5,9.5 L8,14.5Z" fill="#444"/></svg>
<svg class="a" style="left:198px;top:1200px;overflow:visible" width="14" height="16" viewBox="0 0 14 16"><path d="M9.5,3.5 L4.5,8 L9.5,12.5Z" fill="#c3c3c3"/></svg>
<svg class="a" style="left:237px;top:1200px;overflow:visible" width="14" height="16" viewBox="0 0 14 16"><path d="M4.5,3.5 L9.5,8 L4.5,12.5Z" fill="#c3c3c3"/></svg>
<svg class="a" style="left:1390px;top:1202px;overflow:visible" width="6" height="16" viewBox="0 0 6 16"><circle cx="3" cy="2.5" r="1" fill="#aaa"/><circle cx="3" cy="7.5" r="1" fill="#aaa"/><circle cx="3" cy="12.5" r="1" fill="#aaa"/></svg>
<svg class="a" style="left:1360px;top:1238px;overflow:visible" width="20" height="16" viewBox="0 0 20 16"><polyline points="3,12 10,5 17,12" fill="none" stroke="#fff" stroke-width="3.2"/></svg>
<svg class="a" style="left:220px;top:333px;overflow:visible" width="50" height="22" viewBox="0 0 50 22"><path d="M4.5,16 Q18,9 32,3.2 L27.5,18.5 Q16,15.5 4.5,16Z" fill="#1f67b1"/><path d="M32.3,3.2 L28,18.7 L47,18.7Z" fill="#8dc63f"/></svg>
<div class="a" style="left:0;top:0;width:2304px;height:1298px;border:5px solid #b3b5b9;border-radius:34px;box-shadow:0 0 0 60px #fff"></div>
<div class="a" style="left:30px;top:0;width:2274px;height:5px;background:#b3b5b9"></div>
<div class="a" style="left:30px;top:1293px;width:2274px;height:5px;background:#b3b5b9"></div>
</body></html>
